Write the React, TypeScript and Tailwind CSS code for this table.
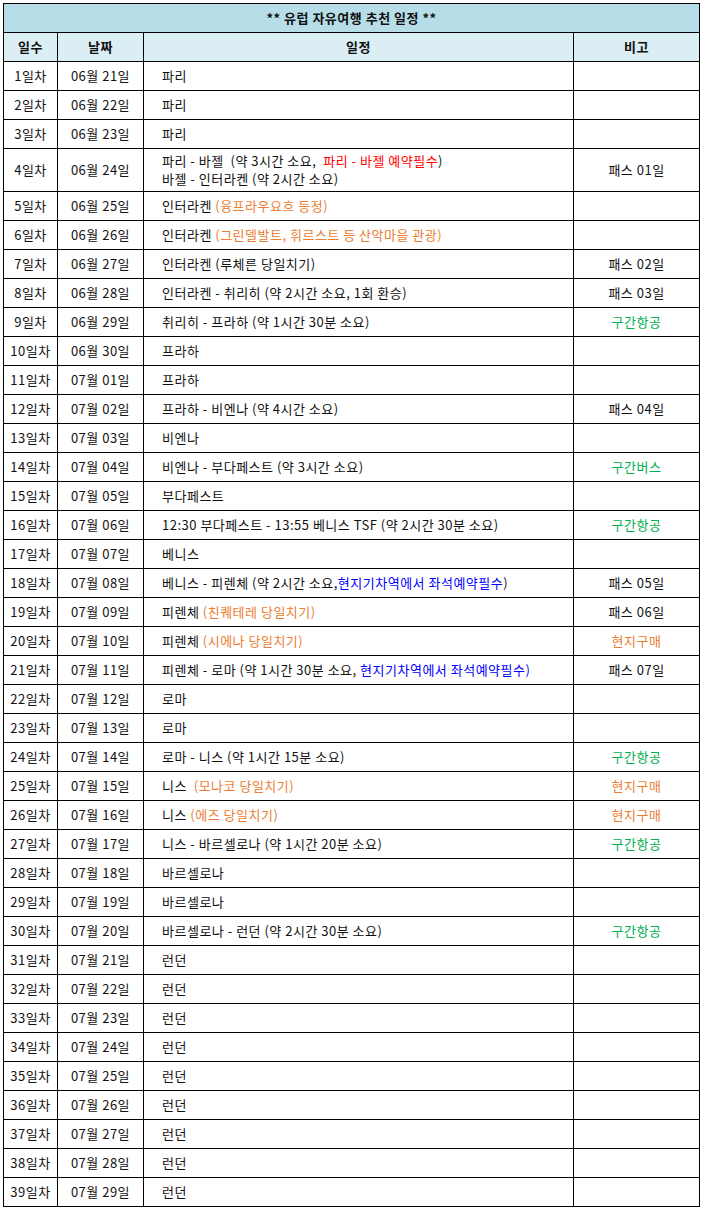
import React from "react";

type Seg = { t: string; c?: "red" | "orange" | "blue" };
type Row = {
  day: number;
  date: string;
  lines: Seg[][];
  note?: string;
  noteColor?: "green" | "orange";
};

const color = {
  red: "text-[#ff0000]",
  orange: "text-[#ed7d31]",
  blue: "text-[#0000ff]",
  green: "text-[#00b050]",
};

const plain = (t: string): Seg[][] => [[{ t }]];

const rows: Row[] = [
  { day: 1, date: "06월 21일", lines: plain("파리") },
  { day: 2, date: "06월 22일", lines: plain("파리") },
  { day: 3, date: "06월 23일", lines: plain("파리") },
  {
    day: 4,
    date: "06월 24일",
    lines: [
      [{ t: "파리 - 바젤  (약 3시간 소요,  " }, { t: "파리 - 바젤 예약필수", c: "red" }, { t: ")" }],
      [{ t: "바젤 - 인터라켄 (약 2시간 소요)" }],
    ],
    note: "패스 01일",
  },
  { day: 5, date: "06월 25일", lines: [[{ t: "인터라켄 " }, { t: "(융프라우요흐 등정)", c: "orange" }]] },
  { day: 6, date: "06월 26일", lines: [[{ t: "인터라켄 " }, { t: "(그린델발트, 휘르스트 등 산악마을 관광)", c: "orange" }]] },
  { day: 7, date: "06월 27일", lines: plain("인터라켄 (루체른 당일치기)"), note: "패스 02일" },
  { day: 8, date: "06월 28일", lines: plain("인터라켄 - 취리히 (약 2시간 소요, 1회 환승)"), note: "패스 03일" },
  { day: 9, date: "06월 29일", lines: plain("취리히 - 프라하 (약 1시간 30분 소요)"), note: "구간항공", noteColor: "green" },
  { day: 10, date: "06월 30일", lines: plain("프라하") },
  { day: 11, date: "07월 01일", lines: plain("프라하") },
  { day: 12, date: "07월 02일", lines: plain("프라하 - 비엔나 (약 4시간 소요)"), note: "패스 04일" },
  { day: 13, date: "07월 03일", lines: plain("비엔나") },
  { day: 14, date: "07월 04일", lines: plain("비엔나 - 부다페스트 (약 3시간 소요)"), note: "구간버스", noteColor: "green" },
  { day: 15, date: "07월 05일", lines: plain("부다페스트") },
  {
    day: 16,
    date: "07월 06일",
    lines: plain("12:30 부다페스트 - 13:55 베니스 TSF (약 2시간 30분 소요)"),
    note: "구간항공",
    noteColor: "green",
  },
  { day: 17, date: "07월 07일", lines: plain("베니스") },
  {
    day: 18,
    date: "07월 08일",
    lines: [[{ t: "베니스 - 피렌체 (약 2시간 소요," }, { t: "현지기차역에서 좌석예약필수", c: "blue" }, { t: ")" }]],
    note: "패스 05일",
  },
  { day: 19, date: "07월 09일", lines: [[{ t: "피렌체 " }, { t: "(친퀘테레 당일치기)", c: "orange" }]], note: "패스 06일" },
  {
    day: 20,
    date: "07월 10일",
    lines: [[{ t: "피렌체 " }, { t: "(시에나 당일치기)", c: "orange" }]],
    note: "현지구매",
    noteColor: "orange",
  },
  {
    day: 21,
    date: "07월 11일",
    lines: [[{ t: "피렌체 - 로마 (약 1시간 30분 소요, " }, { t: "현지기차역에서 좌석예약필수)", c: "blue" }]],
    note: "패스 07일",
  },
  { day: 22, date: "07월 12일", lines: plain("로마") },
  { day: 23, date: "07월 13일", lines: plain("로마") },
  { day: 24, date: "07월 14일", lines: plain("로마 - 니스 (약 1시간 15분 소요)"), note: "구간항공", noteColor: "green" },
  {
    day: 25,
    date: "07월 15일",
    lines: [[{ t: "니스  " }, { t: "(모나코 당일치기)", c: "orange" }]],
    note: "현지구매",
    noteColor: "orange",
  },
  {
    day: 26,
    date: "07월 16일",
    lines: [[{ t: "니스 " }, { t: "(에즈 당일치기)", c: "orange" }]],
    note: "현지구매",
    noteColor: "orange",
  },
  { day: 27, date: "07월 17일", lines: plain("니스 - 바르셀로나 (약 1시간 20분 소요)"), note: "구간항공", noteColor: "green" },
  { day: 28, date: "07월 18일", lines: plain("바르셀로나") },
  { day: 29, date: "07월 19일", lines: plain("바르셀로나") },
  { day: 30, date: "07월 20일", lines: plain("바르셀로나 - 런던 (약 2시간 30분 소요)"), note: "구간항공", noteColor: "green" },
  ...Array.from({ length: 9 }, (_, i) => ({
    day: 31 + i,
    date: `07월 ${21 + i}일`,
    lines: plain("런던"),
  })),
];

const cell = "border border-black px-0 py-0 align-middle";

export default function App() {
  return (
    <div className="bg-white p-[3px] text-[13px] leading-[18px] tracking-[0.5px] text-[#111] [font-family:'Noto_Sans_CJK_KR','Noto_Sans',sans-serif]">
      <table className="w-[696px] table-fixed border-collapse">
        <colgroup>
          <col className="w-[54px]" />
          <col className="w-[86px]" />
          <col className="w-[430px]" />
          <col className="w-[126px]" />
        </colgroup>
        <thead>
          <tr className="h-[29px]">
            <th colSpan={4} className={`${cell} bg-[#b7dde8] text-center font-bold`}>
              ** 유럽 자유여행 추천 일정 **
            </th>
          </tr>
          <tr className="h-[29px]">
            <th className={`${cell} bg-[#daeef3] text-center font-bold`}>일수</th>
            <th className={`${cell} bg-[#daeef3] text-center font-bold`}>날짜</th>
            <th className={`${cell} bg-[#daeef3] text-center font-bold`}>일정</th>
            <th className={`${cell} bg-[#daeef3] text-center font-bold`}>비고</th>
          </tr>
        </thead>
        <tbody>
          {rows.map((r) => (
            <tr key={r.day} className={r.lines.length > 1 ? "h-[43px]" : "h-[29px]"}>
              <td className={`${cell} text-center`}>{r.day}일차</td>
              <td className={`${cell} text-center`}>{r.date}</td>
              <td className={`${cell} pl-[18px] text-left`}>
                {r.lines.map((line, i) => (
                  <div key={i} className="whitespace-pre">
                    {line.map((s, j) => (
                      <span key={j} className={s.c ? color[s.c] : undefined}>
                        {s.t}
                      </span>
                    ))}
                  </div>
                ))}
              </td>
              <td className={`${cell} text-center ${r.noteColor ? color[r.noteColor] : ""}`}>{r.note}</td>
            </tr>
          ))}
        </tbody>
      </table>
    </div>
  );
}
